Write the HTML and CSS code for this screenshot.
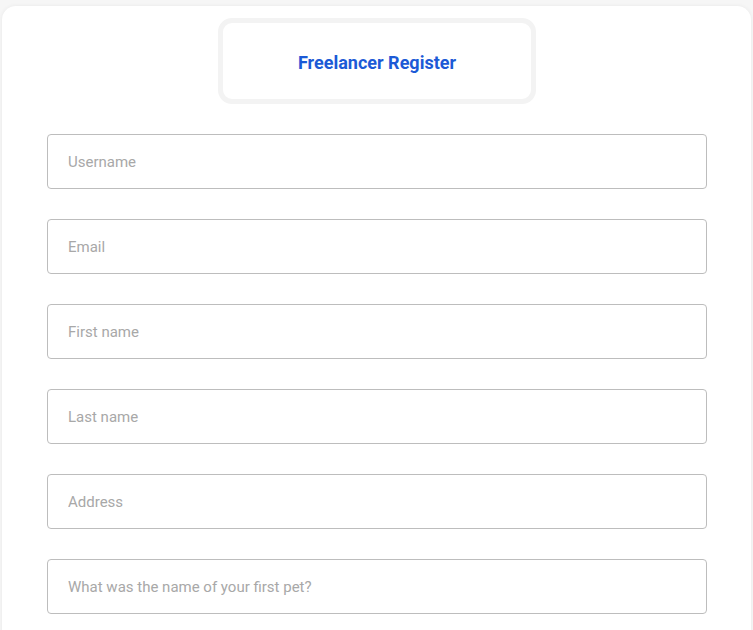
FILE: index.html
```html
<!DOCTYPE html>
<html>
<head>
<meta charset="utf-8">
<link rel="stylesheet" href="styles.css">
</head>
<body>
<div class="card">
  <div class="title-box"><h1 class="title">Freelancer Register</h1></div>
  <form class="form">
    <input class="field" type="text" placeholder="Username">
    <input class="field" type="email" placeholder="Email">
    <input class="field" type="text" placeholder="First name">
    <input class="field" type="text" placeholder="Last name">
    <input class="field" type="text" placeholder="Address">
    <input class="field" type="text" placeholder="What was the name of your first pet?">
  </form>
</div>
</body>
</html>
```
FILE: styles.css
```css
html, body { margin: 0; padding: 0; }
body {
  background: #f6f6f6;
  font-family: Roboto, "Liberation Sans", sans-serif;
  padding: 6px 2px 0 2px;
  height: 630px;
  box-sizing: border-box;
  overflow: hidden;
}
.card {
  background: #fff;
  border-radius: 14px;
  box-shadow: 0 0 4px rgba(0,0,0,0.06);
  padding: 12px 44px 40px 45px;
  display: flex;
  flex-direction: column;
  align-items: center;
}
.title-box {
  width: 318px;
  height: 86px;
  box-sizing: border-box;
  border: 5px solid #f3f3f3;
  border-radius: 14px;
  display: flex;
  align-items: center;
  justify-content: center;
  padding-top: 2px;
}
.title {
  margin: 0;
  font-family: Roboto, sans-serif;
  font-weight: 700;
  font-size: 18px;
  color: #1c5ad6;
}
.form {
  width: 100%;
  margin-top: 30px;
  display: flex;
  flex-direction: column;
  gap: 30px;
}
.field {
  width: 100%;
  height: 55px;
  box-sizing: border-box;
  border: 1px solid #bdbdbd;
  border-radius: 4px;
  padding: 0 20px;
  font-family: Roboto, sans-serif;
  font-size: 15px;
  color: #333;
  outline: none;
  background: #fff;
}
.field::placeholder { color: #a8a8a8; }
```
